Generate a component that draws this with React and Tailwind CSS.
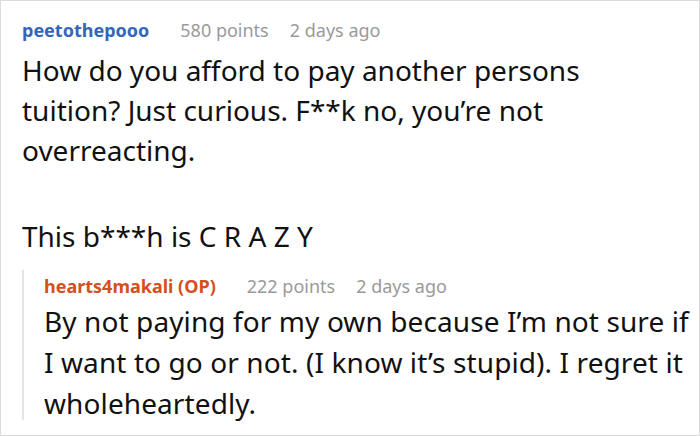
const FONT = "font-['Noto_Sans',sans-serif]";

function Meta({ name, color, points, time }) {
  return (
    <div className="flex items-baseline text-[18px] leading-[24px]">
      <span className={`font-bold ${color}`}>{name}</span>
      <span className="ml-[31px] text-[#9a9a9a]">{points}</span>
      <span className="ml-[21px] text-[#9a9a9a]">{time}</span>
    </div>
  );
}

export default function App() {
  return (
    <div className={`${FONT} w-[700px] h-[436px] bg-white border border-[#dcdcdc] overflow-hidden text-[#111]`}>
      <div className="pl-[21px] pt-[17px]">
        <Meta name="peetothepooo" color="text-[#3366bb]" points="580 points" time="2 days ago" />
        <div className="mt-[8px] text-[28px] leading-[40px]">
          <p>How do you afford to pay another persons</p>
          <p>tuition? Just curious. F**k no, you’re not</p>
          <p>overreacting.</p>
          <p className="mt-[46px]">This b***h is C R A Z Y</p>
        </div>
      </div>

      <div className="ml-[21px] mt-[14px] border-l-2 border-[#e4e4e4] pl-[20px] pt-[4px] h-[150px]">
        <Meta name="hearts4makali (OP)" color="text-[#d4501c]" points="222 points" time="2 days ago" />
        <div className="mt-[3px] text-[28px] leading-[41px] tracking-[0.1px] whitespace-nowrap">
          <p>By not paying for my own because I’m not sure if</p>
          <p>I want to go or not. (I know it’s stupid). I regret it</p>
          <p>wholeheartedly.</p>
        </div>
      </div>
    </div>
  );
}
